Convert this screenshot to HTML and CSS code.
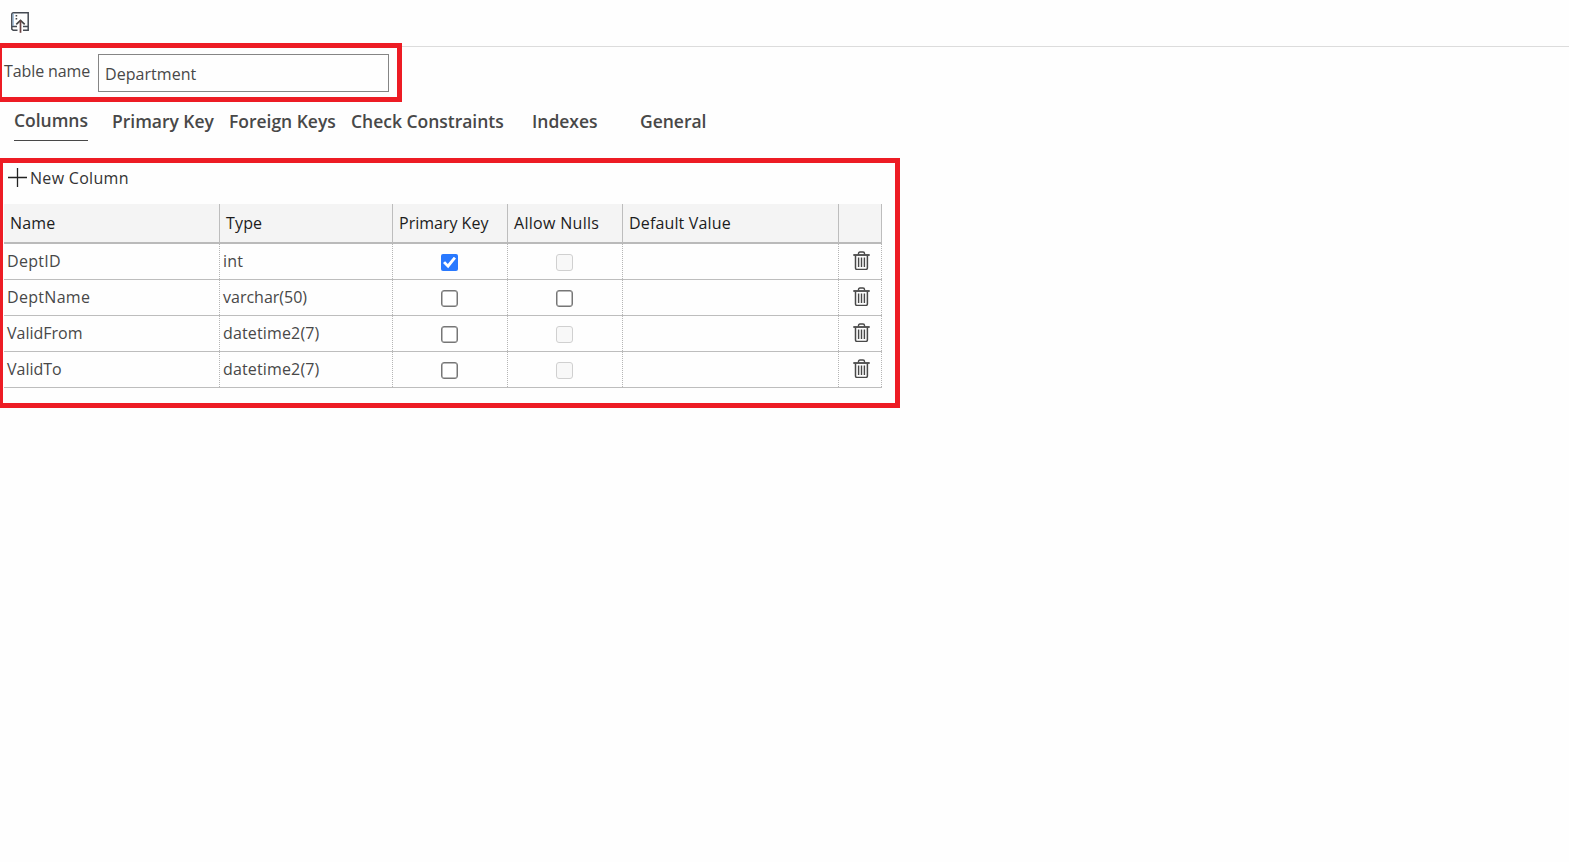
FILE: index.html
```html
<!DOCTYPE html>
<html lang="en">
<head>
<meta charset="utf-8">
<title>Table designer</title>
<link rel="stylesheet" href="styles.css">
</head>
<body>
<svg class="defs" aria-hidden="true">
  <symbol id="trash" viewBox="0 0 17 19">
    <path d="M5.500 3.500v-1q0-1.500 1.500-1.500h3q1.500 0 1.500 1.500v1" fill="none" stroke="#484848" stroke-width="1.400"/>
    <path d="M0.300 4H16.700" stroke="#484848" stroke-width="1.800"/>
    <path d="M2.500 4.500V17q0 1.400 1.400 1.400H13q1.400 0 1.400-1.400V4.500" fill="none" stroke="#484848" stroke-width="1.500"/>
    <path d="M5.600 6.500V16M8.500 6.500V16M11.400 6.500V16" stroke="#484848" stroke-width="1.400"/>
  </symbol>
</svg>
<header class="toolbar">
  <svg class="publish" viewBox="0 0 18 21" fill="none">
    <path d="M6.500 18.300H2.200L0.800 17.200V2.500Q0.800 0.800 2.500 0.800H17.200V18.300H12M1 14.500H6M12 14.500H17" stroke="#454a52" stroke-width="1.500"/>
    <path d="M2.200 1.500V14" stroke="#7fa9cf" stroke-width="1"/>
    <path d="M4.600 3.700h1.600M4.600 6.700h1.600" stroke="#454545" stroke-width="1.600"/>
    <path d="M5.300 12.300L9.500 8.300L13.700 12.300" stroke="#454545" stroke-width="1.700"/>
    <path d="M9.500 20.800V8.500" stroke="#6b4444" stroke-width="1.700"/>
  </svg>
</header>
<section class="name-box">
  <label class="name-label" for="table-name">Table name</label>
  <input class="name-input" id="table-name" type="text" value="Department">
</section>
<nav class="tabs">
  <a class="tab active">Columns</a>
  <a class="tab">Primary Key</a>
  <a class="tab">Foreign Keys</a>
  <a class="tab">Check Constraints</a>
  <a class="tab">Indexes</a>
  <a class="tab">General</a>
</nav>
<main class="columns-box">
  <div class="new-column">
    <svg class="plus" viewBox="0 0 19 19"><path d="M0 9.500H19M9.500 0V19" stroke="#222" stroke-width="1.300"/></svg>
    <span>New Column</span>
  </div>
  <div class="grid">
    <div class="row head"><div>Name</div><div>Type</div><div class="snug">Primary Key</div><div class="wide">Allow Nulls</div><div>Default Value</div><div></div></div>
    <div class="row"><div class="wide">DeptID</div><div>int</div><div class="check"><input type="checkbox" checked></div><div class="check"><input type="checkbox" disabled></div><div></div><div class="action"><svg><use href="#trash"/></svg></div></div>
    <div class="row"><div class="wide">DeptName</div><div class="snug">varchar(50)</div><div class="check"><input type="checkbox"></div><div class="check"><input type="checkbox"></div><div></div><div class="action"><svg><use href="#trash"/></svg></div></div>
    <div class="row"><div class="snug">ValidFrom</div><div>datetime2(7)</div><div class="check"><input type="checkbox"></div><div class="check"><input type="checkbox" disabled></div><div></div><div class="action"><svg><use href="#trash"/></svg></div></div>
    <div class="row"><div class="snug">ValidTo</div><div>datetime2(7)</div><div class="check"><input type="checkbox"></div><div class="check"><input type="checkbox" disabled></div><div></div><div class="action"><svg><use href="#trash"/></svg></div></div>
  </div>
</main>
</body>
</html>
```
FILE: styles.css
```css
* { box-sizing: border-box; }
body {
  margin: 0;
  background: #fefefe;
  color: #484848;
  font: 16px "Open Sans", sans-serif;
}
.defs { display: none; }
.toolbar {
  height: 47px;
  padding: 12px 11px;
  border-bottom: 1px solid #dcdcdc;
}
.publish { display: block; width: 18px; height: 21px; }
.name-box {
  position: relative;
  display: flex;
  align-items: flex-start;
  width: 402px;
  height: 59px;
  margin-top: -4px;
  padding: 6px 0 0 2px;
  border: 5px solid #ed1c24;
  border-left-width: 2px;
  background: #fefefe;
}
.name-label { width: 94px; line-height: 34px; letter-spacing: -0.1px; }
.name-input {
  width: 291px;
  height: 38px;
  padding: 1px 6px 0;
  border: 1px solid #858585;
  background: #fefefe;
  color: #484848;
  font: inherit;
  letter-spacing: 0.05px;
  outline: none;
}
.tabs {
  display: grid;
  grid-template-columns: 98px 117px 122px 181px 108px 100px;
  align-items: start;
  height: 56px;
  padding: 1px 0 0 14px;
  font-size: 17.5px;
  font-weight: 600;
  letter-spacing: -0.02px;
}
.tab { justify-self: start; margin-top: 1px; line-height: 34px; white-space: nowrap; }
.tab.active { height: 38px; margin-top: 0; border-bottom: 1px solid #484848; }
.columns-box {
  width: 900px;
  height: 250px;
  padding-left: 1px;
  border: 5px solid #ed1c24;
  border-left-width: 3px;
}
.new-column {
  display: flex;
  gap: 3px;
  height: 41px;
  padding: 5px 0 0 4px;
  color: #333;
  line-height: 20px;
  letter-spacing: 0.3px;
}
.plus { width: 19px; height: 19px; }
.row {
  display: grid;
  grid-template-columns: 216px 173px 115px 115px 216px 43px;
  width: 878px;
  height: 36px;
  border-bottom: 1px solid #bdbdbd;
  line-height: 34px;
  letter-spacing: 0.15px;
}
.row > div { padding-left: 3px; border-right: 1px dotted #b5b5b5; }
.row.head {
  height: 40px;
  border-bottom: 2px solid #bababa;
  background: #f4f4f4;
  color: #1c1c1c;
  line-height: 38px;
}
.row.head > div { padding-left: 6px; border-right: 1px solid #bdbdbd; }
.row > .snug { letter-spacing: 0; }
.row > .wide { letter-spacing: 0.3px; }
.row > .check { display: flex; justify-content: center; padding: 10px 1px 0 0; }
.check input {
  appearance: none;
  width: 17px;
  height: 17px;
  margin: 0;
  border: 1.5px solid #767676;
  border-radius: 3px;
  background: #fff;
  box-shadow: inset 0 0 0 0.5px #767676;
}
.check input:disabled { border-color: #d0d0d0; background: #f8f8f8; box-shadow: none; }
.check input:checked { display: grid; place-items: center; border: 0; border-radius: 2px; background: #2979ff; box-shadow: none; }
.check input:checked::before {
  content: "";
  width: 13px;
  height: 12px;
  background: #fff;
  clip-path: polygon(0 55%, 16% 40%, 37% 62%, 83% 3%, 100% 16%, 40% 98%);
}
.row > .action { padding: 7px 0 0 14px; }
.action svg { display: block; width: 17px; height: 19px; }
```
